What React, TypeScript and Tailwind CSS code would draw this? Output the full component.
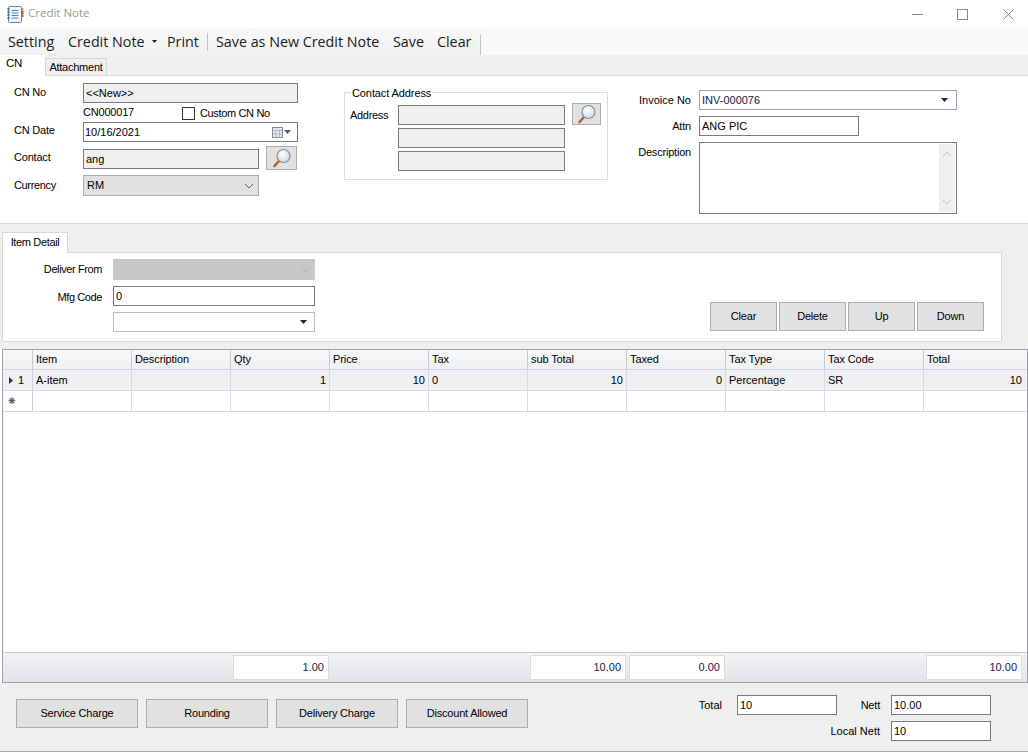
import React from "react";

const font = { fontFamily: '"Liberation Sans", Arial, sans-serif' };

function Search({ cls }: { cls: string }) {
  return (
    <button className={`flex items-center justify-center border border-[#adadad] bg-[#e1e1e1] ${cls}`}>
      <svg width="20" height="20" viewBox="0 0 20 20">
        <defs>
          <radialGradient id="lens" cx="0.4" cy="0.35" r="0.8">
            <stop offset="0" stopColor="#ffffff" />
            <stop offset="1" stopColor="#bcd0e4" />
          </radialGradient>
        </defs>
        <line x1="7" y1="13" x2="2.5" y2="18" stroke="#b5651d" strokeWidth="2.6" strokeLinecap="round" />
        <circle cx="11.5" cy="8" r="6.5" fill="url(#lens)" stroke="#8a9098" strokeWidth="1.2" />
      </svg>
    </button>
  );
}

function Input({ cls, text, gray }: { cls: string; text?: string; gray?: boolean }) {
  return (
    <div
      className={`flex items-center border border-[#7a7a7a] pl-[2px] text-[11px] leading-none text-black ${
        gray ? "bg-[#efefef]" : "bg-white"
      } ${cls}`}
    >
      {text}
    </div>
  );
}

function Chevron({ color = "#606060" }: { color?: string }) {
  return (
    <svg width="10" height="6" viewBox="0 0 10 6">
      <path d="M1 1l4 4 4-4" fill="none" stroke={color} strokeWidth="1" />
    </svg>
  );
}

function Caret() {
  return (
    <svg width="7" height="4" viewBox="0 0 7 4">
      <path d="M0 0h7L3.5 4z" fill="#20202a" />
    </svg>
  );
}

function Label({ w, children, cls = "" }: { w: string; children: React.ReactNode; cls?: string }) {
  return <div className={`shrink-0 text-[11px] leading-none tracking-[-0.2px] text-black ${w} ${cls}`}>{children}</div>;
}

function Btn({ cls, children }: { cls: string; children: React.ReactNode }) {
  return (
    <button className={`flex items-center justify-center border border-[#adadad] bg-[#e1e1e1] text-[11px] tracking-[-0.2px] text-black ${cls}`}>
      {children}
    </button>
  );
}

function FootBox({ text, cls = "" }: { text: string; cls?: string }) {
  return (
    <div className={`flex h-[25px] w-[96px] items-center justify-end border border-[#d9dbe0] bg-white pr-[4px] text-[11px] text-[#20204a] ${cls}`}>
      {text}
    </div>
  );
}

const heads = ["Item", "Description", "Qty", "Price", "Tax", "sub Total", "Taxed", "Tax Type", "Tax Code", "Total"];
const row: [string, boolean][] = [
  ["A-item", false],
  ["", false],
  ["1", true],
  ["10", true],
  ["0", false],
  ["10", true],
  ["0", true],
  ["Percentage", false],
  ["SR", false],
  ["10", true],
];

export default function App() {
  return (
    <div style={font} className="flex h-[752px] w-[1028px] flex-col overflow-hidden bg-white">
      {/* title bar */}
      <div className="flex h-[28px] shrink-0 items-center bg-white pl-[7px]">
        <svg width="17" height="17" viewBox="0 0 17 17">
          <rect x="1.5" y="0.5" width="13" height="16" rx="1" fill="#f4f8fc" stroke="#4a86c8" />
          <path d="M4.5 4.5h7M4.5 7h7M4.5 9.5h7M4.5 12h7" stroke="#5a7fa8" />
          <path d="M0 3h3M0 6h3M0 9h3M0 12h3" stroke="#34689c" />
          <rect x="15" y="2" width="1.5" height="3" fill="#e8b020" />
          <rect x="15" y="5" width="1.5" height="3" fill="#d04040" />
          <rect x="15" y="8" width="1.5" height="3" fill="#50a050" />
        </svg>
        <span style={{ fontFamily: '"Open Sans", sans-serif' }} className="ml-[4px] -translate-y-px text-[11.5px] text-[#9a9a9a]">
          Credit Note
        </span>
        <div className="ml-auto flex items-center">
          <svg width="11" height="11" viewBox="0 0 11 11" className="mr-[34px]">
            <path d="M0 5.5h11" stroke="#8a8a8a" />
          </svg>
          <svg width="11" height="11" viewBox="0 0 11 11" className="mr-[35px]">
            <rect x="0.5" y="0.5" width="10" height="10" fill="none" stroke="#8a8a8a" />
          </svg>
          <svg width="11" height="11" viewBox="0 0 11 11" className="mr-[14px]">
            <path d="M0.5 0.5l10 10M10.5 0.5l-10 10" stroke="#8a8a8a" />
          </svg>
        </div>
      </div>

      {/* toolbar */}
      <div className="h-[27px] shrink-0 bg-[#f9f9f9]">
        <div
          style={{ fontFamily: '"Open Sans", sans-serif' }}
          className="flex h-[27px] w-[481px] items-center bg-gradient-to-b from-[#f8f8f8] to-[#f1f1f1] pl-[8px] text-[14.3px] text-[#1c1c1c]"
        >
          <span className="w-[60px]">Setting</span>
          <span className="w-[84px]">Credit Note</span>
          <span className="flex w-[15px] items-center">
            <svg width="5" height="3" viewBox="0 0 5 3">
              <path d="M0 0h5L2.5 3z" fill="#222" />
            </svg>
          </span>
          <span className="w-[40px]">Print</span>
          <span className="mr-[8px] h-[18px] w-px bg-[#c4c4c4]" />
          <span className="w-[177px] whitespace-nowrap">Save as New Credit Note</span>
          <span className="w-[44px]">Save</span>
          <span>Clear</span>
          <span className="ml-auto h-[21px] w-px self-end bg-[#c4c4c4]" />
        </div>
      </div>

      {/* tabs */}
      <div className="flex h-[21px] shrink-0 border-b border-[#d8d8d8] bg-[#efefef]">
        <div className="relative z-10 h-[21px] w-[45px] bg-white pl-[6px] text-[11.5px] tracking-[-0.3px] text-black">CN</div>
        <div className="mt-[3px] flex h-[17px] w-[62px] items-center justify-center border border-b-0 border-[#d8d8d8] pt-[1px] text-[11px] tracking-[-0.25px] text-black">
          Attachment
        </div>
      </div>

      {/* top form */}
      <div className="flex h-[148px] shrink-0 border-b border-[#d8d8d8] bg-white">
        {/* left */}
        <div className="w-[344px] shrink-0 pl-[14px] pt-[7px]">
          <div className="flex h-[20px]">
            <Label w="w-[69px]" cls="pt-[4px]">CN No</Label>
            <Input gray cls="h-[20px] w-[215px]" text="<<New>>" />
          </div>
          <div className="flex h-[19px] items-center">
            <span className="ml-[69px] w-[99px] text-[11px] leading-none tracking-[-0.2px] text-black">CN000017</span>
            <span className="mt-[1px] h-[13px] w-[13px] border border-[#333] bg-white" />
            <span className="ml-[5px] mt-[1px] text-[11px] leading-none tracking-[-0.35px] text-black">Custom CN No</span>
          </div>
          <div className="flex h-[20px]">
            <Label w="w-[69px]" cls="pt-[3px]">CN Date</Label>
            <div className="flex h-[20px] w-[215px] items-center border border-[#7a7a7a] bg-white pl-[1px] pr-[6px] text-[11px] leading-none text-black">
              10/16/2021
              <svg width="11" height="11" viewBox="0 0 11 11" className="ml-auto">
                <rect x="0.5" y="0.5" width="10" height="10" fill="#e4e8ee" stroke="#808890" />
                <path d="M0 3.5h11M4 3v8M7.5 3v8M0 7h11" stroke="#a0a8b0" strokeWidth="0.7" />
              </svg>
              <span className="ml-[1px] flex"><svg width="7" height="4" viewBox="0 0 7 4"><path d="M0 0h7L3.5 4z" fill="#486090" /></svg></span>
            </div>
          </div>
          <div className="mt-[4px] flex h-[24px]">
            <Label w="w-[69px]" cls="pt-[6px]">Contact</Label>
            <Input gray cls="mt-[3px] h-[20px] w-[176px]" text="ang" />
            <Search cls="ml-[7px] h-[24px] w-[31px]" />
          </div>
          <div className="mt-[5px] flex h-[21px]">
            <Label w="w-[69px]" cls="pt-[5px] tracking-[-0.35px]">Currency</Label>
            <div className="flex h-[21px] w-[176px] items-center justify-between border border-[#adadad] bg-[#e1e1e1] pl-[3px] pr-[4px] text-[11px] leading-none text-black">
              RM
              <Chevron />
            </div>
          </div>
        </div>

        {/* middle */}
        <div className="w-[264px] shrink-0 pt-[10px]">
          <fieldset className="h-[94px] w-[264px] border border-[#dcdcdc] pl-[5px]">
            <legend className="ml-[1px] px-[1px] pt-[1px] text-[11px] leading-[12px] tracking-[-0.1px] text-black">Contact Address</legend>
            <div className="flex pt-[6px]">
              <div className="w-[48px] shrink-0 pt-[5px] text-[11px] leading-none tracking-[-0.3px] text-black">Address</div>
              <div className="flex flex-col gap-[3px]">
                <Input gray cls="h-[20px] w-[167px]" />
                <Input gray cls="h-[20px] w-[167px]" />
                <Input gray cls="h-[20px] w-[167px]" />
              </div>
              <Search cls="-mt-[2px] ml-[7px] h-[22px] w-[29px]" />
            </div>
          </fieldset>
        </div>

        {/* right */}
        <div className="flex flex-col pt-[14px]">
          <div className="flex h-[20px]">
            <Label w="w-[83px]" cls="pt-[5px] text-right tracking-[0px]">Invoice No</Label>
            <div className="ml-[8px] flex h-[20px] w-[258px] items-center justify-between border border-[#a0a0b0] bg-white pl-[2px] pr-[8px] text-[11px] leading-none text-[#20204a]">
              INV-000076
              <Caret />
            </div>
          </div>
          <div className="mt-[6px] flex h-[20px]">
            <Label w="w-[83px]" cls="pt-[5px] text-right">Attn</Label>
            <Input cls="ml-[8px] h-[20px] w-[160px]" text="ANG PIC" />
          </div>
          <div className="mt-[6px] flex h-[72px]">
            <Label w="w-[83px]" cls="pt-[5px] text-right">Description</Label>
            <div className="ml-[8px] flex h-[72px] w-[258px] justify-end border border-[#7a7a7a] bg-white p-[1px]">
              <div className="flex h-full w-[16px] flex-col items-center justify-between bg-[#efefef] py-[7px]">
                <span className="rotate-180"><Chevron color="#bdbdbd" /></span>
                <Chevron color="#bdbdbd" />
              </div>
            </div>
          </div>
        </div>
      </div>

      {/* item detail */}
      <div className="flex h-[125px] shrink-0 flex-col bg-[#efefef] pl-[2px] pt-[8px]">
        <div className="relative z-10 -mb-px flex h-[21px] w-[66px] items-center justify-center border border-b-0 border-[#d8d8d8] bg-white pb-[2px] text-[11px] tracking-[-0.35px] text-black">
          Item Detail
        </div>
        <div className="flex h-[90px] w-[1000px] justify-between border border-[#d8d8d8] bg-white">
          <div className="flex flex-col pt-[6px]">
            <div className="flex h-[21px] items-center">
              <Label w="w-[99px]" cls="text-right tracking-[-0.4px]">Deliver From</Label>
              <div className="ml-[11px] flex h-[21px] w-[202px] items-center justify-end bg-[#c8c8c8] pr-[4px]">
                <Chevron color="#b0b0b0" />
              </div>
            </div>
            <div className="mt-[6px] flex h-[20px] items-center">
              <Label w="w-[99px]" cls="pt-[3px] text-right tracking-[-0.4px]">Mfg Code</Label>
              <Input cls="ml-[11px] h-[20px] w-[202px]" text="0" />
            </div>
            <div className="ml-[110px] mt-[6px] flex h-[20px] w-[202px] items-center justify-end border border-[#b8b8c4] bg-white pr-[7px]">
              <Caret />
            </div>
          </div>
          <div className="mr-[17px] mt-[49px] flex gap-[2px]">
            <Btn cls="h-[29px] w-[67px]">Clear</Btn>
            <Btn cls="h-[29px] w-[67px]">Delete</Btn>
            <Btn cls="h-[29px] w-[67px]">Up</Btn>
            <Btn cls="h-[29px] w-[67px]">Down</Btn>
          </div>
        </div>
      </div>

      {/* grid */}
      <div className="ml-[2px] flex h-[334px] shrink-0 flex-col border border-[#a0a0a8] bg-white">
        <div className="grid h-[20px] shrink-0 grid-cols-[30px_repeat(9,99px)_101px] border-b border-[#d0d0d8] bg-gradient-to-b from-[#f8f8fa] to-[#eef0f2]">
          <div className="border-r border-[#c8c8d0]" />
          {heads.map((h) => (
            <div key={h} className="flex items-center border-r border-[#c8c8d0] pl-[3px] text-[11px] tracking-[-0.1px] text-black last:border-r-0">
              {h}
            </div>
          ))}
        </div>
        <div className="grid h-[21px] shrink-0 grid-cols-[30px_repeat(9,99px)_101px] border-b border-[#d8d8de] bg-[#eff0f2]">
          <div className="flex items-center border-r border-[#d0d0d8] pl-[6px] text-[11px] text-black">
            <svg width="4" height="7" viewBox="0 0 4 7" className="mr-[5px]">
              <path d="M0 0l4 3.5L0 7z" fill="#303040" />
            </svg>
            1
          </div>
          {row.map(([t, right], i) => (
            <div
              key={i}
              className={`flex items-center border-r border-[#d8d8de] px-[3px] text-[11px] text-black last:border-r-0 ${
                right ? "justify-end" : ""
              }`}
            >
              {t}
            </div>
          ))}
        </div>
        <div className="grid h-[21px] shrink-0 grid-cols-[30px_repeat(9,99px)_101px] border-b border-[#d8d8de]">
          <div className="flex items-center border-r border-[#d0d0d8] pl-[5px] text-[9px] leading-none text-[#404040]">
            ❋
          </div>
          {heads.map((h) => (
            <div key={h} className="border-r border-[#d8d8de] last:border-r-0" />
          ))}
        </div>
        <div className="flex-1" />
        <div className="flex h-[30px] shrink-0 items-center border-t border-[#c8c8d0] bg-gradient-to-b from-[#f2f3f5] to-[#e2e3e7] pl-[230px]">
          <FootBox text="1.00" />
          <FootBox text="10.00" cls="ml-[201px]" />
          <FootBox text="0.00" cls="ml-[3px]" />
          <FootBox text="10.00" cls="ml-[201px]" />
        </div>
      </div>

      {/* footer */}
      <div className="flex flex-1 border-b border-[#a8a8a8] bg-[#efefef]">
        <div className="ml-[16px] mt-[16px] flex h-[29px] gap-[8px]">
          <Btn cls="h-[29px] w-[122px]">Service Charge</Btn>
          <Btn cls="h-[29px] w-[122px]">Rounding</Btn>
          <Btn cls="h-[29px] w-[122px]">Delivery Charge</Btn>
          <Btn cls="h-[29px] w-[122px]">Discount Allowed</Btn>
        </div>
        <div className="ml-[169px] mt-[12px] flex flex-col gap-[6px]">
          <div className="flex h-[20px] items-center">
            <Label w="w-[25px]" cls="text-right tracking-[0px]">Total</Label>
            <Input cls="ml-[15px] h-[20px] w-[100px]" text="10" />
            <Label w="w-[43px]" cls="text-right">Nett</Label>
            <Input cls="ml-[11px] h-[20px] w-[100px]" text="10.00" />
          </div>
          <div className="flex h-[20px] items-center justify-end">
            <Label w="w-[60px]" cls="text-right tracking-[0px]">Local Nett</Label>
            <Input cls="ml-[11px] h-[20px] w-[100px]" text="10" />
          </div>
        </div>
      </div>
    </div>
  );
}
